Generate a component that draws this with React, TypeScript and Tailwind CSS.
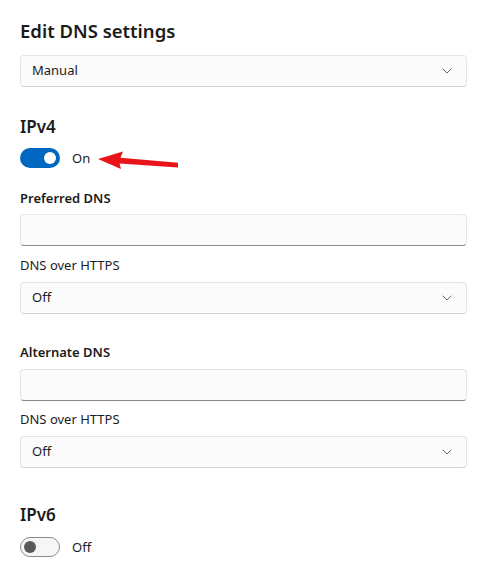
import React from "react";

const font = { fontFamily: '"Noto Sans", "Open Sans", sans-serif' };

function Chevron() {
  return (
    <svg width="10" height="6" viewBox="0 0 10 6" fill="none" className="text-[#6b6b6b]">
      <path d="M1 1 L5 5 L9 1" stroke="currentColor" strokeWidth="1" strokeLinecap="round" strokeLinejoin="round" />
    </svg>
  );
}

function Select({ value }: { value: string }) {
  return (
    <div className="h-[32px] flex items-center justify-between rounded-[4px] border border-[#e5e5e5] border-b-[#d2d2d2] bg-[#fbfbfb] pl-[11px] pr-[14px]">
      <span className="text-[13px] text-[#1b1b1b]">{value}</span>
      <Chevron />
    </div>
  );
}

function Input() {
  return (
    <div className="h-[32px] rounded-[4px] border border-[#e5e5e5] border-b-[#8a8a8a] bg-[#fbfbfb]" />
  );
}

function Toggle({ on }: { on: boolean }) {
  return on ? (
    <div className="w-[40px] h-[20px] rounded-full bg-[#0067c0] flex items-center justify-end pr-[4px]">
      <div className="w-[12px] h-[12px] rounded-full bg-white" />
    </div>
  ) : (
    <div className="w-[40px] h-[20px] rounded-full border border-[#8a8a8a] bg-[#f6f6f6] flex items-center pl-[3px]">
      <div className="w-[12px] h-[12px] rounded-full bg-[#5a5a5a]" />
    </div>
  );
}

export default function App() {
  return (
    <div className="w-[477px] h-[577px] bg-white overflow-hidden" style={font}>
      <div className="pl-[20px] pr-[10px] pt-[19px] flex flex-col">
        <h1 className="text-[18.5px] leading-[24px] font-semibold text-[#1b1b1b]">Edit DNS settings</h1>
        <div className="mt-[12px]">
          <Select value="Manual" />
        </div>

        <h2 className="mt-[26px] text-[17px] leading-[28px] font-semibold text-[#1b1b1b]">IPv4</h2>
        <div className="mt-[7px] relative flex items-center gap-[12px]">
          <Toggle on />
          <span className="text-[13px] leading-[20px] text-[#1b1b1b]">On</span>
          <svg
            className="absolute left-[75px] top-0"
            width="86"
            height="24"
            viewBox="0 0 86 24"
          >
            <path d="M3 11 L28 3.5 L25.5 9.8 L83 14.8 L83 19.5 L24.5 15.5 L26 21 Z" fill="#e8141a" />
          </svg>
        </div>

        <div className="mt-[20px] text-[13px] leading-[20px] font-semibold text-[#1b1b1b]">Preferred DNS</div>
        <div className="mt-[6px]">
          <Input />
        </div>
        <div className="mt-[9px] text-[13px] leading-[20px] text-[#1b1b1b]">DNS over HTTPS</div>
        <div className="mt-[7px]">
          <Select value="Off" />
        </div>

        <div className="mt-[28px] text-[13px] leading-[20px] font-semibold text-[#1b1b1b]">Alternate DNS</div>
        <div className="mt-[7px]">
          <Input />
        </div>
        <div className="mt-[8px] text-[13px] leading-[20px] text-[#1b1b1b]">DNS over HTTPS</div>
        <div className="mt-[7px]">
          <Select value="Off" />
        </div>

        <h2 className="mt-[33px] text-[17px] leading-[28px] font-semibold text-[#1b1b1b]">IPv6</h2>
        <div className="mt-[8px] flex items-center gap-[12px]">
          <Toggle on={false} />
          <span className="text-[13px] leading-[20px] text-[#1b1b1b]">Off</span>
        </div>
      </div>
    </div>
  );
}
